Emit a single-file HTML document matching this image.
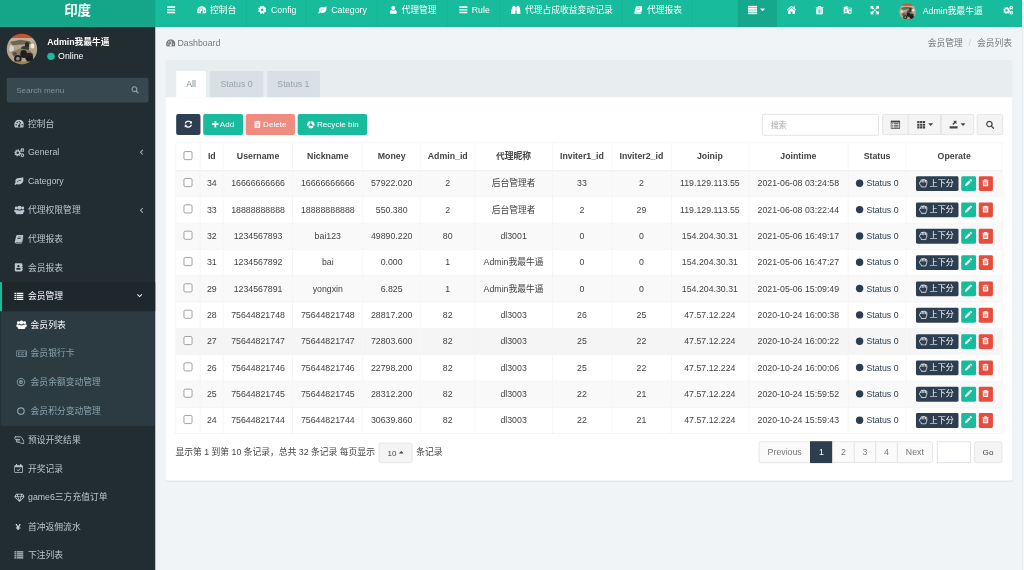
<!DOCTYPE html><html lang="zh"><head><meta charset="utf-8"><title>印度</title><style>
*{box-sizing:border-box}
html,body{margin:0;padding:0;width:1024px;height:570px;overflow:hidden;background:#f4f6f8}
#w{position:absolute;left:0;top:0;border-right:1px solid #e2e7eb;width:1515.3px;height:846px;transform:scale(.675);transform-origin:0 0;font:13px/1.42857 "Liberation Sans","Noto Sans CJK SC",sans-serif;color:#444;background:#f1f4f6;overflow:hidden}
svg.i{display:inline-block;vertical-align:middle;position:relative;top:-1px}
a{color:inherit;text-decoration:none}
ul{list-style:none;margin:0;padding:0}
/* header */
#hd{position:absolute;left:0;top:0;width:1515px;height:40px;background:#18bc9c;color:#fff}
#logo{position:absolute;left:0;top:0;width:230px;height:40px;background:#15a589;text-align:center;font-size:20px;font-weight:bold;line-height:30px}
#tog{position:absolute;left:230px;top:0;width:46.7px;height:40px;line-height:29px;padding-left:17px}
#nav{position:absolute;left:276.7px;top:0;height:40px;display:flex}
#nav li{height:40px;line-height:29px;text-align:center;border-right:1px solid rgba(0,0,0,.06);white-space:nowrap}
#nav li svg{margin-right:6.4px}
#nav li{padding-left:2.4px}
.hr{position:absolute;top:0;height:40px;line-height:29.5px;text-align:center}
#dd{left:1093.3px;width:57.8px;background:rgba(0,0,0,.1);padding-right:3px}
/* sidebar */
#sb{position:absolute;left:0;top:40px;width:230px;height:806px;background:#222d32;color:#b8c7ce}
#up{position:absolute;left:0;top:0;width:230px;height:65px}
#up .avs{position:absolute;left:10px;top:10px}
.avs{display:block}
#up .nm{position:absolute;left:70px;top:12px;color:#fff;font-weight:bold;font-size:13px;line-height:20px;white-space:nowrap}
#up .on{position:absolute;left:70px;top:36px;color:#fff;font-size:13px;line-height:16px;white-space:nowrap}
#up .on b{display:inline-block;width:11px;height:11px;border-radius:50%;background:#18bc9c;margin-right:5px;position:relative;top:.5px}
#sf{position:absolute;left:10px;top:75px;width:210px;height:36.5px;background:#374850;border-radius:3px;color:#85929a;line-height:38.5px;padding-left:14px;font-size:12px}
#sf svg{position:absolute;right:14px;top:12px;color:#9aa7ad}
#mn{position:absolute;left:0;top:122.8px;width:230px}
#mn li a{display:block;height:42.57px;line-height:42.57px;padding-left:17.5px;border-left:3px solid transparent;position:relative;white-space:nowrap}
#mn li a .ic{display:inline-block;width:21px;text-align:left}
#mn li a .r{position:absolute;right:18px;top:0}
#mn li.act>a{background:#1e282c;border-left-color:#18bc9c;color:#fff}
#mn ul{margin:0 1px;background:#2c3b41}
#mn ul li a{padding-left:20px;color:#8aa4af}
#mn ul li a .ic{width:21.3px}
#mn ul li.cur a{color:#fff}
/* content */
#bc1{position:absolute;left:246px;top:40px;height:48.5px;line-height:48.5px;color:#777;white-space:nowrap}
#bc1 svg{margin-right:3px}
#bc2{position:absolute;right:15px;top:40px;height:48.5px;line-height:48.5px;color:#777;white-space:nowrap}
#bc2 i{font-style:normal;color:#ccc;padding:0 8.7px}
#pn{position:absolute;left:245px;top:89px;width:1255px;height:622.7px;background:#fff;border-radius:3px;box-shadow:0 1px 1px rgba(0,0,0,.05)}
#ph{position:absolute;left:0;top:0;width:1255px;height:55px;background:#e8edf0;border-radius:3px 3px 0 0}
.tab{position:absolute;top:16px;height:39px;line-height:40px;text-align:center;border-radius:1px 1px 0 0;background:#d8e0e6;color:#95a5a6}
.tab.a{background:#fff;color:#7b8a8b}
.btn{position:absolute;border-radius:3px;text-align:center;white-space:nowrap;font-size:12px}
.tb{top:79.5px;height:31px;line-height:30px;color:#fff}
.tb svg{margin-right:3px;top:0}
.bd{background:#f4f4f4;border:1px solid #ddd;color:#444;line-height:28px}
#si{position:absolute;left:883.7px;top:79.6px;width:173px;height:32px;border:1px solid #d2d6de;border-radius:3px;background:#fff;color:#aaa;line-height:30px;padding-left:12px;font-size:12px}
table{position:absolute;left:15px;top:122px;width:1224.5px;border-collapse:collapse;table-layout:fixed;text-align:center}
th,td{border:1px solid #f1f1f1;padding:0;white-space:nowrap;overflow:hidden}
th{height:41px;font-weight:bold;border-bottom:2px solid #f1f1f1;color:#444}
td{height:39px;color:#444}
tr.o td{background:#f9f9f9}
tr.h td{background:#f5f5f5}
.cb{display:inline-block;width:13px;height:13px;border:1px solid #767676;border-radius:2.5px;background:#fff;vertical-align:middle;position:relative;top:-2px}
.st{color:#2c3e50}
.st b{display:inline-block;width:11px;height:11px;position:relative;top:1px;border-radius:50%;background:#2c3e50;margin-right:5px}
.ob{display:inline-block;height:22px;line-height:20px;border-radius:2.2px;color:#fff;font-size:12px;vertical-align:middle;text-align:center;margin:0 2.2px}
.ob svg{top:-1px}
.pg{position:absolute;top:564.5px;height:32.5px;line-height:30.5px;border:1px solid #ddd;background:#fafafa;color:#777;text-align:center;margin-left:-1px}
#pd{position:absolute;left:15px;top:564.5px;height:32.5px;line-height:32.5px;white-space:nowrap;color:#444}
</style></head><body><div id="w"><div id="hd"><div id="logo">印度</div><div id="tog"><svg class="i " viewBox="0 0 16 16" width="13.00" height="13.00" style="" fill="currentColor"><path d="M0.500 1.600h15v3h-15zM0.500 6.500h15v3h-15zM0.500 11.400h15v3h-15z"/></svg></div><ul id="nav"><li style="width:89.0px;padding-right:1.4px"><svg class="i " viewBox="0 1.700 16 13.200" width="13.87" height="11.44" style="margin-right:5px" fill="currentColor"><path fill-rule="evenodd" d="M8 2a8 8 0 0 1 8 8c0 1.600-.45 3-1.250 4.300-.1.200-.3.300-.5.300H1.750c-.2 0-.4-.1-.5-.3C.45 13 0 11.600 0 10a8 8 0 0 1 8-8zM3.300 9a1.150 1.150 0 1 0 0 2.300 1.150 1.150 0 0 0 0-2.300zm1.500-3.500a1.150 1.150 0 1 0 0 2.300 1.150 1.150 0 0 0 0-2.300zM8 4a1.150 1.150 0 1 0 0 2.300 1.150 1.150 0 0 0 0-2.300zm4.700 5a1.150 1.150 0 1 0 0 2.300 1.150 1.150 0 0 0 0-2.300zM10.700 6.200 9.100 10.300a1.900 1.900 0 1 1-1.200-.35l1.600-4.100z"/></svg>控制台</li><li style="width:88.5px"><svg class="i " viewBox="0 0 16 16" width="13.00" height="13.00" style="" fill="currentColor"><path fill-rule="evenodd" d="M15.49 9.80 L14.57 12.02 L12.88 11.66 L11.66 12.88 L12.02 14.57 L9.80 15.49 L8.86 14.04 L7.14 14.04 L6.20 15.49 L3.98 14.57 L4.34 12.88 L3.12 11.66 L1.43 12.02 L0.51 9.80 L1.96 8.86 L1.96 7.14 L0.51 6.20 L1.43 3.98 L3.12 4.34 L4.34 3.12 L3.98 1.43 L6.20 0.51 L7.14 1.96 L8.86 1.96 L9.80 0.51 L12.02 1.43 L11.66 3.12 L12.88 4.34 L14.57 3.98 L15.49 6.20 L14.04 7.14 L14.04 8.86Z M5.70 8.00 a2.30 2.30 0 1 0 4.60 0 a2.30 2.30 0 1 0 -4.60 0Z"/></svg>Config</li><li style="width:105.2px"><svg class="i " viewBox="0 0 16 16" width="13.00" height="13.00" style="" fill="currentColor"><path fill-rule="evenodd" d="M15.400 2c.4 1.100.6 2.400.6 3.700 0 5-3.700 8.200-8.200 8.200-1.300 0-2.500-.3-3.500-.8-.5.600-1.100 1.700-1.900 1.700C1.500 14.800.7 14 .7 13.200c0-.9 1-1.700 1.700-2.400C2.100 10.100 1.900 9.300 1.900 8.400c0-3.400 2.700-5.300 6.100-5.300 2.600 0 5.100-.1 7.400-1.100zM11.500 6.500C8.700 6.500 6.600 7.400 4.600 9.600c-.3.300.2.800.5.500C7.100 8.100 8.900 7.300 11.500 7.200c.5 0 .5-.7 0-.7z"/></svg>Category</li><li style="width:103.6px"><svg class="i " viewBox="0 0 14 16" width="11.38" height="13.00" style="" fill="currentColor"><path d="M7 1a3.600 3.600 0 1 1 0 7.200A3.600 3.600 0 0 1 7 1zM3.700 8.200c.9.800 2 1.300 3.300 1.300s2.400-.5 3.300-1.300c2.400.2 3.200 2.600 3.200 4.600 0 1.400-.9 2.200-2.200 2.200H2.700C1.400 15 .5 14.200.5 12.800c0-2 .8-4.400 3.200-4.600z"/></svg>代理管理</li><li style="width:77.9px"><svg class="i " viewBox="0 0 16 16" width="13.00" height="13.00" style="" fill="currentColor"><path d="M0.500 1.600h15v3h-15zM0.500 6.500h15v3h-15zM0.500 11.400h15v3h-15z"/></svg>Rule</li><li style="width:181.2px"><svg class="i " viewBox="0 0 17 15" width="14.73" height="13.00" style="" fill="currentColor"><path d="M3.200 .5h3.600v1.700h.7v11.600c0 .4-.3.700-.7.700H.700c-.4 0-.7-.3-.7-.7V11.500C0 8.500 2 5 2.600 2.200h.6zM10.200 .5h3.600v1.700h.6C15 5 17 8.500 17 11.500v2.300c0 .4-.3.700-.7.700h-6.100c-.4 0-.7-.3-.7-.7V2.200h.7zM7.900 2.800h1.200v6.400H7.900z"/></svg>代理占成收益变动记录</li><li style="width:104.1px"><svg class="i " viewBox="0 0 16 16" width="13.00" height="13.00" style="" fill="currentColor"><path fill-rule="evenodd" d="M5.200 1.500h9c.9 0 1.500.8 1.200 1.700l-2.600 8.600c-.3 1-.9 1.500-1.900 1.500H2.700c-.3 0-.4.300-.2.500.2.300.6.400 1 .400h8.100c.4 0 .700-.200.900-.600l2.700-8.500c.5.300.6 1 .4 1.600l-2.500 8c-.3.800-1 1.300-1.800 1.300H3.200c-1 0-2-.7-2.300-1.600-.2-.5-.1-.9 0-1.300L3.500 3c.3-.9.900-1.500 1.700-1.500zM6.300 4.300l-.3 1h5.800l.3-1zM5.600 6.600l-.3 1h5.800l.3-1z"/></svg>代理报表</li></ul><div class="hr" id="dd"><svg class="i " viewBox="0 0 16 16" width="14.00" height="14.00" style="" fill="currentColor"><path d="M0 .8h16v2.900H0zM0 4.600h16v2.900H0zM0 8.400h16v2.900H0zM0 12.200h16v2.900H0z"/></svg> <svg class="i " viewBox="0 0 8 16" width="7.50" height="15.00" style="" fill="currentColor"><path d="M0 6h8L4 10.300z"/></svg></div><div class="hr" style="left:1151.6px;width:42px"><svg class="i " viewBox="0 0 17 14" width="15.30" height="12.60" style="" fill="currentColor"><path d="M8.500 .6 16.300 7.100c.15.100.15.350 0 .5l-.6.700c-.1.150-.35.150-.5 0L8.500 2.700 1.800 8.300c-.15.150-.4.150-.5 0l-.6-.7c-.15-.15-.15-.4 0-.5zM8.500 4l5.600 4.700v4.600c0 .35-.3.700-.7.700H10.100V10H6.900v4H3.600c-.4 0-.7-.35-.7-.7V8.700zM12.200 1.400h2v3.500l-2-1.700z"/></svg></div><div class="hr" style="left:1193.4px;width:42px"><svg class="i " viewBox="0 0 14 16" width="12.25" height="14.00" style="" fill="currentColor"><path fill-rule="evenodd" d="M4.800 1h4.400l.9 1.600h3.200c.2 0 .3.100.3.300v.8c0 .2-.1.300-.3.300H.700c-.2 0-.3-.1-.3-.3v-.8c0-.2.100-.3.300-.3h3.200zM1.400 4.800h11.200v8.900c0 .9-.6 1.600-1.300 1.600H2.700c-.7 0-1.300-.7-1.300-1.600zM4 6.500v6.800h1.100V6.500zm2.450 0v6.800h1.100V6.500zm2.450 0v6.800H10V6.500z"/></svg></div><div class="hr" style="left:1234.7px;width:42px"><svg class="i " viewBox="0 0 15 16" width="13.12" height="14.00" style="" fill="currentColor"><path fill-rule="evenodd" d="M1 2.500 7.500 1v3h6.300c.4 0 .7.300.7.700v8.600c0 .4-.3.700-.7.700H8.200L7.500 12.500 1 14zM8.600 5l2 7.500 2.600 0V5zM2.800 5.800c.4 1.500 1.100 2.600 2.100 3.300-.7.500-1.400.8-2.200.9v.9c1.100-.1 2.100-.5 2.900-1.200.4.250.8.350 1.200.45v-.9c-.2-.05-.4-.1-.6-.2.600-.8.900-1.800.9-2.900h-.9c0 .9-.25 1.700-.7 2.400-.8-.5-1.400-1.400-1.800-2.700zM10.800 6.200l-.9 4h.8l.2-.9h1.300l.2.900h.8l-.9-4zm.7 1 .4 1.500h-.8z"/></svg></div><div class="hr" style="left:1275.3px;width:42px"><svg class="i " viewBox="0 0 16 16" width="14.00" height="14.00" style="" fill="currentColor"><path d="M.8 .8h5.700L4.700 2.600 7 4.900 4.900 7 2.600 4.700.8 6.500zM15.200 .8v5.700l-1.800-1.800L11.100 7 9 4.900l2.300-2.300L9.500 .8zM.8 15.200V9.500l1.800 1.800L4.900 9 7 11.100l-2.300 2.300 1.800 1.800zM15.200 15.200H9.500l1.800-1.800L9 11.100 11.100 9l2.300 2.300 1.800-1.800zM5.900 8 8 5.900 10.100 8 8 10.100z"/></svg></div><div class="hr" style="left:1332px;width:25px;top:5px;height:25px"><svg class="avs" width="25" height="25" viewBox="0 0 45 45"><defs><clipPath id="ca"><circle cx="22.5" cy="22.5" r="22.5"/></clipPath><filter id="fa" x="-10%" y="-10%" width="120%" height="120%"><feGaussianBlur stdDeviation="0.9"/></filter></defs><g clip-path="url(#ca)"><g filter="url(#fa)"><rect x="-3" y="-3" width="51" height="51" fill="#b3a48e"/><rect x="-3" y="-3" width="51" height="9.500" fill="#c2552b"/><rect x="-3" y="6.500" width="51" height="5" fill="#bfb29c"/><path d="M5 12 L20 9 L34 11 L36 15 L22 16 L8 17Z" fill="#6f6553"/><ellipse cx="30" cy="17" rx="3" ry="5" fill="#2b2a28"/><ellipse cx="38" cy="18" rx="3" ry="4" fill="#ece8e0"/><ellipse cx="27" cy="22" rx="6" ry="4" fill="#3a3732"/><ellipse cx="7" cy="22" rx="3.500" ry="5" fill="#d9d3c8"/><path d="M6 27 L20 22 L33 24 L40 30 L38 36 L24 33 L10 34Z" fill="#8b7d68"/><ellipse cx="25" cy="30" rx="5" ry="6" fill="#201e1c"/><ellipse cx="33" cy="34" rx="6" ry="6" fill="#262320"/><ellipse cx="12" cy="30" rx="3" ry="3" fill="#5d503c"/><circle cx="16.500" cy="37" r="5.500" fill="#1d1c1a"/><circle cx="16.500" cy="37" r="2.800" fill="#8d8980"/><circle cx="34" cy="38" r="5" fill="#1f1d1b"/><rect x="10" y="41" width="25" height="4" fill="#9a8253"/></g></g></svg></div><div class="hr" style="left:1367px;white-space:nowrap;line-height:31px">Admin我最牛逼</div><div class="hr" style="left:1485px;width:17px"><svg class="i " viewBox="0 0 18 16" width="15.75" height="14.00" style="" fill="currentColor"><path fill-rule="evenodd" d="M11.99 8.76 L11.62 10.60 L9.96 10.42 L9.27 11.45 L10.06 12.92 L8.49 13.96 L7.44 12.66 L6.23 12.89 L5.74 14.49 L3.90 14.12 L4.08 12.46 L3.05 11.77 L1.58 12.56 L0.54 10.99 L1.84 9.94 L1.61 8.73 L0.01 8.24 L0.38 6.40 L2.04 6.58 L2.73 5.55 L1.94 4.08 L3.51 3.04 L4.56 4.34 L5.77 4.11 L6.26 2.51 L8.10 2.88 L7.92 4.54 L8.95 5.23 L10.42 4.44 L11.46 6.01 L10.16 7.06 L10.39 8.27Z M3.90 8.50 a2.10 2.10 0 1 0 4.20 0 a2.10 2.10 0 1 0 -4.20 0Z M17.52 3.05 L17.52 4.55 L16.36 4.62 L15.89 5.43 L16.41 6.48 L15.11 7.22 L14.47 6.26 L13.53 6.26 L12.89 7.22 L11.59 6.48 L12.11 5.43 L11.64 4.62 L10.48 4.55 L10.48 3.05 L11.64 2.98 L12.11 2.17 L11.59 1.12 L12.89 0.38 L13.53 1.34 L14.47 1.34 L15.11 0.38 L16.41 1.12 L15.89 2.17 L16.36 2.98Z M12.90 3.80 a1.10 1.10 0 1 0 2.20 0 a1.10 1.10 0 1 0 -2.20 0Z M17.59 12.93 L17.14 14.36 L16.01 14.08 L15.33 14.72 L15.51 15.87 L14.05 16.20 L13.72 15.08 L12.83 14.81 L11.93 15.54 L10.91 14.44 L11.71 13.60 L11.50 12.69 L10.41 12.27 L10.86 10.84 L11.99 11.12 L12.67 10.48 L12.49 9.33 L13.95 9.00 L14.28 10.12 L15.17 10.39 L16.07 9.66 L17.09 10.76 L16.29 11.60 L16.50 12.51Z M12.90 12.60 a1.10 1.10 0 1 0 2.20 0 a1.10 1.10 0 1 0 -2.20 0Z"/></svg></div></div><div id="sb"><div id="up"><svg class="avs" width="45" height="45" viewBox="0 0 45 45"><defs><clipPath id="cb"><circle cx="22.5" cy="22.5" r="22.5"/></clipPath><filter id="fb" x="-10%" y="-10%" width="120%" height="120%"><feGaussianBlur stdDeviation="0.9"/></filter></defs><g clip-path="url(#cb)"><g filter="url(#fb)"><rect x="-3" y="-3" width="51" height="51" fill="#b3a48e"/><rect x="-3" y="-3" width="51" height="9.500" fill="#c2552b"/><rect x="-3" y="6.500" width="51" height="5" fill="#bfb29c"/><path d="M5 12 L20 9 L34 11 L36 15 L22 16 L8 17Z" fill="#6f6553"/><ellipse cx="30" cy="17" rx="3" ry="5" fill="#2b2a28"/><ellipse cx="38" cy="18" rx="3" ry="4" fill="#ece8e0"/><ellipse cx="27" cy="22" rx="6" ry="4" fill="#3a3732"/><ellipse cx="7" cy="22" rx="3.500" ry="5" fill="#d9d3c8"/><path d="M6 27 L20 22 L33 24 L40 30 L38 36 L24 33 L10 34Z" fill="#8b7d68"/><ellipse cx="25" cy="30" rx="5" ry="6" fill="#201e1c"/><ellipse cx="33" cy="34" rx="6" ry="6" fill="#262320"/><ellipse cx="12" cy="30" rx="3" ry="3" fill="#5d503c"/><circle cx="16.500" cy="37" r="5.500" fill="#1d1c1a"/><circle cx="16.500" cy="37" r="2.800" fill="#8d8980"/><circle cx="34" cy="38" r="5" fill="#1f1d1b"/><rect x="10" y="41" width="25" height="4" fill="#9a8253"/></g></g></svg><div class="nm">Admin我最牛逼</div><div class="on"><b></b>Online</div></div><div id="sf">Search menu<svg class="i " viewBox="0 0 16 16" width="12.00" height="12.00" style="" fill="currentColor"><path fill-rule="evenodd" d="M6.800 1a5.800 5.800 0 0 1 4.800 9.100l3.300 3.300c.5.500.5 1.200 0 1.700s-1.200.5-1.700 0l-3.300-3.300A5.800 5.800 0 1 1 6.800 1zm0 2.100a3.700 3.700 0 1 0 0 7.400 3.700 3.700 0 0 0 0-7.400z"/></svg></div><ul id="mn"><li class=""><a><span class="ic"><svg class="i " viewBox="0 1.700 16 13.200" width="14.93" height="12.32" style="" fill="currentColor"><path fill-rule="evenodd" d="M8 2a8 8 0 0 1 8 8c0 1.600-.45 3-1.250 4.300-.1.200-.3.300-.5.300H1.750c-.2 0-.4-.1-.5-.3C.45 13 0 11.600 0 10a8 8 0 0 1 8-8zM3.300 9a1.150 1.150 0 1 0 0 2.300 1.150 1.150 0 0 0 0-2.300zm1.500-3.500a1.150 1.150 0 1 0 0 2.300 1.150 1.150 0 0 0 0-2.300zM8 4a1.150 1.150 0 1 0 0 2.300 1.150 1.150 0 0 0 0-2.300zm4.700 5a1.150 1.150 0 1 0 0 2.300 1.150 1.150 0 0 0 0-2.300zM10.700 6.200 9.100 10.300a1.900 1.900 0 1 1-1.200-.35l1.600-4.100z"/></svg></span>控制台</a></li><li class=""><a><span class="ic"><svg class="i " viewBox="0 0 18 16" width="15.75" height="14.00" style="" fill="currentColor"><path fill-rule="evenodd" d="M11.99 8.76 L11.62 10.60 L9.96 10.42 L9.27 11.45 L10.06 12.92 L8.49 13.96 L7.44 12.66 L6.23 12.89 L5.74 14.49 L3.90 14.12 L4.08 12.46 L3.05 11.77 L1.58 12.56 L0.54 10.99 L1.84 9.94 L1.61 8.73 L0.01 8.24 L0.38 6.40 L2.04 6.58 L2.73 5.55 L1.94 4.08 L3.51 3.04 L4.56 4.34 L5.77 4.11 L6.26 2.51 L8.10 2.88 L7.92 4.54 L8.95 5.23 L10.42 4.44 L11.46 6.01 L10.16 7.06 L10.39 8.27Z M3.90 8.50 a2.10 2.10 0 1 0 4.20 0 a2.10 2.10 0 1 0 -4.20 0Z M17.52 3.05 L17.52 4.55 L16.36 4.62 L15.89 5.43 L16.41 6.48 L15.11 7.22 L14.47 6.26 L13.53 6.26 L12.89 7.22 L11.59 6.48 L12.11 5.43 L11.64 4.62 L10.48 4.55 L10.48 3.05 L11.64 2.98 L12.11 2.17 L11.59 1.12 L12.89 0.38 L13.53 1.34 L14.47 1.34 L15.11 0.38 L16.41 1.12 L15.89 2.17 L16.36 2.98Z M12.90 3.80 a1.10 1.10 0 1 0 2.20 0 a1.10 1.10 0 1 0 -2.20 0Z M17.59 12.93 L17.14 14.36 L16.01 14.08 L15.33 14.72 L15.51 15.87 L14.05 16.20 L13.72 15.08 L12.83 14.81 L11.93 15.54 L10.91 14.44 L11.71 13.60 L11.50 12.69 L10.41 12.27 L10.86 10.84 L11.99 11.12 L12.67 10.48 L12.49 9.33 L13.95 9.00 L14.28 10.12 L15.17 10.39 L16.07 9.66 L17.09 10.76 L16.29 11.60 L16.50 12.51Z M12.90 12.60 a1.10 1.10 0 1 0 2.20 0 a1.10 1.10 0 1 0 -2.20 0Z"/></svg></span>General<span class="r"><svg class="i " viewBox="0 0 8 16" width="6.50" height="13.00" style="" fill="currentColor"><path d="M6.300 3.200 7.400 4.300 3.700 8l3.700 3.700-1.100 1.100L1.500 8z"/></svg></span></a></li><li class=""><a><span class="ic"><svg class="i " viewBox="0 0 16 16" width="14.00" height="14.00" style="" fill="currentColor"><path fill-rule="evenodd" d="M15.400 2c.4 1.100.6 2.400.6 3.700 0 5-3.700 8.200-8.200 8.200-1.300 0-2.500-.3-3.500-.8-.5.600-1.100 1.700-1.900 1.700C1.500 14.800.7 14 .7 13.200c0-.9 1-1.700 1.700-2.400C2.100 10.100 1.900 9.300 1.900 8.400c0-3.400 2.700-5.300 6.100-5.300 2.600 0 5.100-.1 7.400-1.100zM11.500 6.500C8.700 6.500 6.600 7.400 4.600 9.600c-.3.300.2.800.5.500C7.100 8.100 8.900 7.300 11.500 7.200c.5 0 .5-.7 0-.7z"/></svg></span>Category</a></li><li class=""><a><span class="ic"><svg class="i " viewBox="0 0 18 16" width="15.75" height="14.00" style="" fill="currentColor"><path d="M9 .8a3.500 3.500 0 1 1 0 7 3.500 3.500 0 0 1 0-7zM3.500 2.200a2.400 2.400 0 1 1 0 4.800 2.400 2.400 0 0 1 0-4.800zM14.500 2.200a2.400 2.400 0 1 1 0 4.800 2.400 2.400 0 0 1 0-4.800zM5.500 8c1 .8 2.200 1.200 3.500 1.200s2.500-.4 3.500-1.200c2.300.2 3.100 2.700 3.100 4.700 0 1.500-.9 2.500-2.100 2.500h-9c-1.200 0-2.100-1-2.100-2.500 0-2 .8-4.500 3.100-4.700zM1.800 7.300c.5.400 1.100.600 1.700.600.5 0 1-.15 1.400-.4-.8.500-1.400 1.100-1.800 1.900-.4.800-.6 1.600-.7 2.600H1.600C.6 12 0 11.400 0 10.300c0-1.500.5-2.900 1.800-3zM16.200 7.300c1.300.100 1.800 1.500 1.800 3 0 1.100-.6 1.700-1.600 1.700h-.8c-.1-1-.3-1.800-.7-2.600-.4-.8-1-1.400-1.800-1.900.4.250.9.400 1.400.400.6 0 1.200-.2 1.700-.6z"/></svg></span>代理权限管理<span class="r"><svg class="i " viewBox="0 0 8 16" width="6.50" height="13.00" style="" fill="currentColor"><path d="M6.300 3.200 7.400 4.300 3.700 8l3.700 3.700-1.100 1.100L1.500 8z"/></svg></span></a></li><li class=""><a><span class="ic"><svg class="i " viewBox="0 0 16 16" width="14.00" height="14.00" style="" fill="currentColor"><path fill-rule="evenodd" d="M5.200 1.500h9c.9 0 1.500.8 1.200 1.700l-2.600 8.600c-.3 1-.9 1.500-1.900 1.500H2.700c-.3 0-.4.300-.2.500.2.300.6.400 1 .400h8.100c.4 0 .700-.200.900-.600l2.700-8.500c.5.300.6 1 .4 1.600l-2.500 8c-.3.800-1 1.300-1.800 1.300H3.200c-1 0-2-.7-2.300-1.600-.2-.5-.1-.9 0-1.300L3.500 3c.3-.9.900-1.500 1.700-1.500zM6.300 4.300l-.3 1h5.800l.3-1zM5.600 6.600l-.3 1h5.800l.3-1z"/></svg></span>代理报表</a></li><li class=""><a><span class="ic"><svg class="i " viewBox="0 0 15 16" width="13.12" height="14.00" style="" fill="currentColor"><path fill-rule="evenodd" d="M2.500 1h9.500c.8 0 1.500.7 1.500 1.500v11c0 .8-.7 1.500-1.500 1.500H2.500C1.700 15 1 14.300 1 13.500v-11C1 1.700 1.700 1 2.500 1zM7.200 4a2 2 0 1 0 0 4 2 2 0 0 0 0-4zM5.300 8.600c-1.300.2-1.800 1.300-1.800 2.300 0 .7.500 1.100 1.200 1.100h5c.7 0 1.200-.4 1.200-1.100 0-1-.5-2.100-1.800-2.300-.5.400-1.200.7-1.900.7s-1.400-.3-1.900-.7zM14 3.500h.7c.2 0 .3.100.3.300v1.900c0 .2-.1.300-.3.300H14zM14 7h.7c.2 0 .3.100.3.300v1.900c0 .2-.1.300-.3.300H14zM14 10.500h.7c.2 0 .3.100.3.300v1.900c0 .2-.1.300-.3.300H14z"/></svg></span>会员报表</a></li><li class="act"><a><span class="ic"><svg class="i " viewBox="0 0 16 16" width="14.00" height="14.00" style="" fill="currentColor"><path d="M.3 2h2.900v2.200H.3zM4.200 2h11.500v2.200H4.200zM.3 5.300h2.900v2.200H.3zM4.200 5.300h11.500v2.200H4.200zM.3 8.600h2.900v2.200H.3zM4.200 8.600h11.500v2.200H4.200zM.3 11.900h2.900v2.200H.3zM4.200 11.900h11.500v2.200H4.200z"/></svg></span>会员管理<span class="r"><svg class="i " viewBox="0 0 12 16" width="9.75" height="13.00" style="" fill="currentColor"><path d="M1.300 5.600 2.400 4.500 6 8.100l3.600-3.600 1.100 1.100L6 10.300z"/></svg></span></a></li><li><ul><li class="cur"><a><span class="ic"><svg class="i " viewBox="0 0 18 16" width="15.75" height="14.00" style="" fill="currentColor"><path d="M9 .8a3.500 3.500 0 1 1 0 7 3.500 3.500 0 0 1 0-7zM3.500 2.200a2.400 2.400 0 1 1 0 4.800 2.400 2.400 0 0 1 0-4.800zM14.500 2.200a2.400 2.400 0 1 1 0 4.800 2.400 2.400 0 0 1 0-4.800zM5.500 8c1 .8 2.200 1.200 3.500 1.200s2.500-.4 3.500-1.200c2.300.2 3.100 2.700 3.100 4.700 0 1.500-.9 2.500-2.100 2.500h-9c-1.200 0-2.100-1-2.100-2.500 0-2 .8-4.500 3.100-4.700zM1.800 7.300c.5.400 1.100.600 1.700.600.5 0 1-.15 1.400-.4-.8.500-1.400 1.100-1.800 1.900-.4.800-.6 1.600-.7 2.600H1.600C.6 12 0 11.400 0 10.300c0-1.500.5-2.900 1.800-3zM16.200 7.300c1.300.100 1.800 1.500 1.800 3 0 1.100-.6 1.700-1.600 1.700h-.8c-.1-1-.3-1.800-.7-2.600-.4-.8-1-1.400-1.800-1.900.4.250.9.400 1.400.400.6 0 1.200-.2 1.700-.6z"/></svg></span>会员列表</a></li><li class=""><a><span class="ic"><svg class="i " viewBox="0 0 18 16" width="15.75" height="14.00" style="" fill="currentColor"><path fill-rule="evenodd" d="M1.500 2.500h15c.8 0 1.500.7 1.500 1.500v8c0 .8-.7 1.500-1.500 1.500h-15C.7 13.500 0 12.800 0 12V4c0-.8.700-1.500 1.500-1.500zM1.300 3.800v8.400h15.400V3.800zM3 5.500h4.500v1H4.200v3h3.300v1H3zM9 5.500h4.500v1h-3.300v3h3.300v1H9zM15 5.500h1v5h-1z"/></svg></span>会员银行卡</a></li><li class=""><a><span class="ic"><svg class="i " viewBox="0 0 16 16" width="14.00" height="14.00" style="" fill="currentColor"><path fill-rule="evenodd" d="M8 1a7 7 0 1 1 0 14A7 7 0 0 1 8 1zm0 1.500a5.500 5.500 0 1 0 0 11 5.500 5.500 0 0 0 0-11zM8 4.600a3.400 3.400 0 1 1 0 6.800 3.400 3.400 0 0 1 0-6.800zM5.700 7.400v1.200h4.600V7.400zM0 7.400h2v1.200H0zM14 7.400h2v1.200h-2z"/></svg></span>会员余额变动管理</a></li><li class=""><a><span class="ic"><svg class="i " viewBox="0 0 16 16" width="14.00" height="14.00" style="" fill="currentColor"><path fill-rule="evenodd" d="M8 1.500a6.500 6.500 0 1 1 0 13 6.500 6.500 0 0 1 0-13zm0 2a4.500 4.500 0 1 0 0 9 4.500 4.500 0 0 0 0-9z"/></svg></span>会员积分变动管理</a></li></ul></li><li class=""><a><span class="ic"><svg class="i " viewBox="0 0 18 14" width="15.48" height="12.04" style="" fill="currentColor"><path fill="none" stroke="currentColor" stroke-width="1.500" stroke-linejoin="round" stroke-linecap="round" d="M2.200 1.300H10.500C12.300 1.300 13.200 2.600 14.200 4.500L16.800 9.200V12.600H12.300C10.800 12.600 10.200 11.200 8.800 10.700H5C3.400 10.700 3.400 8.600 5 8.400C3.300 8.200 3.300 6 5 5.800H2.200C.4 5.800.4 1.300 2.200 1.300ZM5 5.800H9.500M5 8.400H8.800"/></svg></span>预设开奖结果</a></li><li class=""><a><span class="ic"><svg class="i " viewBox="0 0 15 16" width="13.12" height="14.00" style="" fill="currentColor"><path fill-rule="evenodd" d="M3.500.5h1c.3 0 .5.200.5.500v1.500h5V1c0-.3.200-.5.500-.5h1c.3 0 .5.200.5.500v1.500h1.500c.8 0 1.500.7 1.500 1.500v10c0 .8-.7 1.500-1.500 1.500h-12C.7 15.500 0 14.800 0 14V4c0-.8.700-1.500 1.500-1.500H3V1c0-.3.200-.5.500-.5zM1.400 6v8h12.200V6zM10.300 7.500l.9.900-4.500 4.500-2.600-2.600.9-.9 1.700 1.700z"/></svg></span>开奖记录</a></li><li class=""><a><span class="ic"><svg class="i " viewBox="0 0 18 16" width="15.75" height="14.00" style="" fill="currentColor"><path fill-rule="evenodd" d="M4 1.500h10c.2 0 .4.100.5.300l3.300 4.400c.2.300.2.600 0 .9l-8.300 8.200c-.3.300-.7.300-1 0L.2 7.100c-.2-.3-.2-.6 0-.9L3.500 1.800c.1-.2.300-.3.500-.3zM4.600 3 2.500 5.800h3zM7 3 6.200 5.800h5.600L11 3zM13.400 3l-.9 2.800h3zM2.300 7.200 7.700 12.700 5.700 7.200zM7.200 7.200 9 12.600l1.800-5.400zM12.300 7.200l-2 5.500 5.400-5.500z"/></svg></span>game6三方充值订单</a></li><li class=""><a><span class="ic"><span style="font-weight:bold;padding-left:2.5px;font-size:14px;color:#d5dfe3">¥</span></span>首冲返佣流水</a></li><li class=""><a><span class="ic"><svg class="i " viewBox="0 0 16 16" width="14.00" height="14.00" style="" fill="currentColor"><path d="M.3 2h2.900v2.200H.3zM4.200 2h11.500v2.200H4.200zM.3 5.300h2.900v2.200H.3zM4.200 5.300h11.500v2.200H4.200zM.3 8.600h2.900v2.200H.3zM4.200 8.600h11.500v2.200H4.200zM.3 11.900h2.900v2.200H.3zM4.200 11.900h11.500v2.200H4.200z"/></svg></span>下注列表</a></li></ul></div><div id="bc1"><svg class="i " viewBox="0 1.700 16 13.200" width="13.87" height="11.44" style="" fill="currentColor"><path fill-rule="evenodd" d="M8 2a8 8 0 0 1 8 8c0 1.600-.45 3-1.250 4.300-.1.200-.3.300-.5.300H1.750c-.2 0-.4-.1-.5-.3C.45 13 0 11.600 0 10a8 8 0 0 1 8-8zM3.300 9a1.150 1.150 0 1 0 0 2.300 1.150 1.150 0 0 0 0-2.300zm1.500-3.500a1.150 1.150 0 1 0 0 2.300 1.150 1.150 0 0 0 0-2.300zM8 4a1.150 1.150 0 1 0 0 2.300 1.150 1.150 0 0 0 0-2.300zm4.700 5a1.150 1.150 0 1 0 0 2.300 1.150 1.150 0 0 0 0-2.300zM10.700 6.200 9.100 10.300a1.900 1.900 0 1 1-1.200-.35l1.600-4.100z"/></svg>Dashboard</div><div id="bc2">会员管理<i>/</i>会员列表</div><div id="pn"><div id="ph"><div class="tab a" style="left:16.0px;width:44.2px">All</div><div class="tab " style="left:66.2px;width:78.5px">Status 0</div><div class="tab " style="left:150.6px;width:78.2px">Status 1</div></div><div class="btn tb" style="left:15.7px;width:36.0px;background:#2c3e50"><svg class="i " viewBox="0 0 16 16" width="12.00" height="12.00" style="margin:0" fill="currentColor"><path d="M15.300 1.500v5.200h-5.200l1.900-1.900C11 3.900 9.600 3.300 8 3.300c-2.200 0-4 1.400-4.600 3.400H.8C1.500 3.200 4.500.8 8 .8c2.200 0 4.200.9 5.700 2.300zM.7 14.500V9.300h5.200L4 11.200c1 .9 2.400 1.500 4 1.500 2.200 0 4-1.400 4.600-3.400h2.600c-.7 3.500-3.700 5.900-7.200 5.900-2.200 0-4.200-.9-5.700-2.300z"/></svg></div><div class="btn tb" style="left:55.7px;width:58.9px;background:#18bc9c"><svg class="i " viewBox="0 0 16 16" width="12.00" height="12.00" style="margin-right:.5px" fill="currentColor"><path d="M6.200 1.500h3.600v4.700h4.700v3.600H9.800v4.700H6.200V9.800H1.500V6.200h4.700z"/></svg>Add</div><div class="btn tb" style="left:119.1px;width:72.6px;background:#ef8b80"><svg class="i " viewBox="0 0 14 16" width="10.50" height="12.00" style="" fill="currentColor"><path fill-rule="evenodd" d="M4.800 1h4.400l.9 1.600h3.200c.2 0 .3.100.3.300v.8c0 .2-.1.300-.3.300H.700c-.2 0-.3-.1-.3-.3v-.8c0-.2.100-.3.300-.3h3.200zM1.400 4.800h11.200v8.900c0 .9-.6 1.600-1.300 1.600H2.700c-.7 0-1.300-.7-1.300-1.600zM4 6.500v6.800h1.100V6.500zm2.450 0v6.800h1.100V6.500zm2.450 0v6.800H10V6.500z"/></svg>Delete</div><div class="btn tb" style="left:196.1px;width:103.0px;background:#18bc9c"><svg class="i " viewBox="0 0 16 16" width="13.00" height="13.00" style="" fill="currentColor"><path fill="none" stroke="currentColor" stroke-width="4.200" d="M8.82 3.57A4.70 4.70 0 0 1 12.42 9.81M11.60 11.22A4.70 4.70 0 0 1 4.40 11.22M3.58 9.81A4.70 4.70 0 0 1 7.18 3.57"/></svg>Recycle bin</div><div id="si">搜索</div><div class="btn tb bd" style="left:1062.4px;width:38.8px;border-radius:3px 0 0 3px"><svg class="i " viewBox="0 0.800 16 14.400" width="15.00" height="13.50" style="margin:0" fill="currentColor"><path fill-rule="evenodd" d="M1.500 1.500h13c.6 0 1 .4 1 1v11c0 .6-.4 1-1 1h-13c-.6 0-1-.4-1-1v-11c0-.6.400-1 1-1zM1.800 4.500v8.700h12.400V4.500zM3 5.800h1.800v1.500H3zm3 0h7v1.500H6zM3 8.300h1.800v1.500H3zm3 0h7v1.500H6zM3 10.800h1.800v1.500H3zm3 0h7v1.500H6z"/></svg></div><div class="btn tb bd" style="left:1100.2px;width:49.3px;border-radius:0"><svg class="i " viewBox="0 0 16 16" width="13.50" height="13.50" style="margin:0" fill="currentColor"><path d="M1 1.500h4v3.600H1zM6 1.500h4v3.600H6zM11 1.500h4v3.600h-4zM1 6.200h4v3.600H1zM6 6.200h4v3.600H6zM11 6.200h4v3.600h-4zM1 10.900h4v3.600H1zM6 10.900h4v3.600H6zM11 10.900h4v3.600h-4z"/></svg> <svg class="i " viewBox="0 0 8 16" width="7.50" height="15.00" style="margin:0" fill="currentColor"><path d="M0 6h8L4 10.300z"/></svg></div><div class="btn tb bd" style="left:1148.5px;width:49.4px;border-radius:0 3px 3px 0"><svg class="i " viewBox="0 0 16 16" width="13.50" height="13.50" style="margin:0" fill="currentColor"><path d="M13 1v6l-2-2-3.500 3.500L5.700 6.700 9.200 3.200 7 1zM1 10.500h14v4H1z"/></svg> <svg class="i " viewBox="0 0 8 16" width="7.50" height="15.00" style="margin:0" fill="currentColor"><path d="M0 6h8L4 10.300z"/></svg></div><div class="btn tb bd" style="left:1201.5px;width:39.7px;border-radius:3px"><svg class="i " viewBox="0 0 16 16" width="13.50" height="13.50" style="margin:0" fill="currentColor"><path fill-rule="evenodd" d="M6.800 1a5.800 5.800 0 0 1 4.800 9.100l3.300 3.300c.5.500.5 1.200 0 1.700s-1.200.5-1.700 0l-3.300-3.300A5.800 5.800 0 1 1 6.800 1zm0 2.100a3.700 3.700 0 1 0 0 7.400 3.700 3.700 0 0 0 0-7.400z"/></svg></div><table><colgroup><col style="width:36.3px"><col style="width:34.0px"><col style="width:103.0px"><col style="width:103.7px"><col style="width:85.5px"><col style="width:80.7px"><col style="width:114.4px"><col style="width:88.1px"><col style="width:88.1px"><col style="width:114.8px"><col style="width:147.4px"><col style="width:85.9px"><col style="width:142.6px"></colgroup><thead><tr><th><span class="cb"></span></th><th>Id</th><th>Username</th><th>Nickname</th><th>Money</th><th>Admin_id</th><th>代理昵称</th><th>Inviter1_id</th><th>Inviter2_id</th><th>Joinip</th><th>Jointime</th><th>Status</th><th>Operate</th></tr></thead><tbody><tr class="o"><td><span class="cb"></span></td><td>34</td><td>16666666666</td><td>16666666666</td><td>57922.020</td><td>2</td><td>后台管理者</td><td>33</td><td>2</td><td>119.129.113.55</td><td>2021-06-08 03:24:58</td><td class="st"><b></b>Status 0</td><td><span class="ob" style="width:63px;background:#2c3e50;padding-right:2px"><svg class="i " viewBox="0 0 16 16" width="13.50" height="13.50" style="" fill="currentColor"><path fill="none" stroke="currentColor" stroke-width="1.400" stroke-linejoin="round" stroke-linecap="round" d="M4.800 14.800C4.800 13 2.600 11.800 1.700 10.200C.9 8.800 1.200 7 2.600 6.700C3.100 6.600 3.600 6.800 3.800 7.200V4.200C3.800 2.700 5.900 2.300 6.300 3.700C6.500 1.700 8.900 1.500 9.200 3.400C9.600 1.900 11.700 2.200 11.800 3.900C12.300 2.900 14.300 3.200 14.300 5V9.300C14.300 11.200 12.600 12.400 12.600 14.800ZM6.300 3.700V6.800M9.100 3.400V6.800M11.800 3.900V6.800"/></svg><span style="margin-left:2.3px">上下分</span></span><span class="ob" style="width:22px;background:#18bc9c"><svg class="i " viewBox="0 0 16 16" width="11.50" height="11.50" style="" fill="currentColor"><path d="M11.800 1c.5-.5 1.200-.5 1.700 0L15 2.500c.5.500.5 1.200 0 1.700l-1.500 1.500-3.200-3.200zM9.500 3.300l3.200 3.200-8 8L.9 15.400c-.2.100-.4-.1-.3-.3L1.500 11.300z"/></svg></span><span class="ob" style="width:21px;background:#e74c3c;margin-left:1.3px"><svg class="i " viewBox="0 0 14 16" width="10.06" height="11.50" style="" fill="currentColor"><path fill-rule="evenodd" d="M4.800 1h4.400l.9 1.600h3.200c.2 0 .3.100.3.300v.8c0 .2-.1.300-.3.300H.700c-.2 0-.3-.1-.3-.3v-.8c0-.2.100-.3.300-.3h3.200zM1.400 4.800h11.200v8.900c0 .9-.6 1.600-1.300 1.600H2.700c-.7 0-1.300-.7-1.300-1.600zM4 6.500v6.800h1.100V6.500zm2.450 0v6.800h1.100V6.500zm2.450 0v6.800H10V6.500z"/></svg></span></td></tr><tr class=""><td><span class="cb"></span></td><td>33</td><td>18888888888</td><td>18888888888</td><td>550.380</td><td>2</td><td>后台管理者</td><td>2</td><td>29</td><td>119.129.113.55</td><td>2021-06-08 03:22:44</td><td class="st"><b></b>Status 0</td><td><span class="ob" style="width:63px;background:#2c3e50;padding-right:2px"><svg class="i " viewBox="0 0 16 16" width="13.50" height="13.50" style="" fill="currentColor"><path fill="none" stroke="currentColor" stroke-width="1.400" stroke-linejoin="round" stroke-linecap="round" d="M4.800 14.800C4.800 13 2.600 11.800 1.700 10.200C.9 8.800 1.200 7 2.600 6.700C3.100 6.600 3.600 6.800 3.800 7.200V4.200C3.800 2.700 5.900 2.300 6.300 3.700C6.500 1.700 8.900 1.500 9.200 3.400C9.600 1.900 11.700 2.200 11.800 3.900C12.300 2.900 14.300 3.200 14.300 5V9.300C14.300 11.200 12.600 12.400 12.600 14.800ZM6.300 3.700V6.800M9.100 3.400V6.800M11.800 3.900V6.800"/></svg><span style="margin-left:2.3px">上下分</span></span><span class="ob" style="width:22px;background:#18bc9c"><svg class="i " viewBox="0 0 16 16" width="11.50" height="11.50" style="" fill="currentColor"><path d="M11.800 1c.5-.5 1.200-.5 1.700 0L15 2.500c.5.500.5 1.200 0 1.700l-1.500 1.500-3.200-3.200zM9.500 3.300l3.200 3.200-8 8L.9 15.400c-.2.100-.4-.1-.3-.3L1.500 11.300z"/></svg></span><span class="ob" style="width:21px;background:#e74c3c;margin-left:1.3px"><svg class="i " viewBox="0 0 14 16" width="10.06" height="11.50" style="" fill="currentColor"><path fill-rule="evenodd" d="M4.800 1h4.400l.9 1.600h3.200c.2 0 .3.100.3.300v.8c0 .2-.1.300-.3.300H.700c-.2 0-.3-.1-.3-.3v-.8c0-.2.100-.3.300-.3h3.200zM1.400 4.800h11.200v8.900c0 .9-.6 1.600-1.300 1.600H2.700c-.7 0-1.300-.7-1.300-1.600zM4 6.500v6.800h1.100V6.500zm2.450 0v6.800h1.100V6.500zm2.450 0v6.800H10V6.500z"/></svg></span></td></tr><tr class="o"><td><span class="cb"></span></td><td>32</td><td>1234567893</td><td>bai123</td><td>49890.220</td><td>80</td><td>dl3001</td><td>0</td><td>0</td><td>154.204.30.31</td><td>2021-05-06 16:49:17</td><td class="st"><b></b>Status 0</td><td><span class="ob" style="width:63px;background:#2c3e50;padding-right:2px"><svg class="i " viewBox="0 0 16 16" width="13.50" height="13.50" style="" fill="currentColor"><path fill="none" stroke="currentColor" stroke-width="1.400" stroke-linejoin="round" stroke-linecap="round" d="M4.800 14.800C4.800 13 2.600 11.800 1.700 10.200C.9 8.800 1.200 7 2.600 6.700C3.100 6.600 3.600 6.800 3.800 7.200V4.200C3.800 2.700 5.900 2.300 6.300 3.700C6.500 1.700 8.900 1.500 9.200 3.400C9.600 1.900 11.700 2.200 11.800 3.900C12.300 2.900 14.300 3.200 14.300 5V9.300C14.300 11.200 12.600 12.400 12.600 14.800ZM6.300 3.700V6.800M9.100 3.400V6.800M11.800 3.900V6.800"/></svg><span style="margin-left:2.3px">上下分</span></span><span class="ob" style="width:22px;background:#18bc9c"><svg class="i " viewBox="0 0 16 16" width="11.50" height="11.50" style="" fill="currentColor"><path d="M11.800 1c.5-.5 1.200-.5 1.700 0L15 2.500c.5.500.5 1.200 0 1.700l-1.500 1.500-3.200-3.200zM9.500 3.300l3.200 3.200-8 8L.9 15.400c-.2.100-.4-.1-.3-.3L1.500 11.300z"/></svg></span><span class="ob" style="width:21px;background:#e74c3c;margin-left:1.3px"><svg class="i " viewBox="0 0 14 16" width="10.06" height="11.50" style="" fill="currentColor"><path fill-rule="evenodd" d="M4.800 1h4.400l.9 1.600h3.200c.2 0 .3.100.3.300v.8c0 .2-.1.300-.3.300H.700c-.2 0-.3-.1-.3-.3v-.8c0-.2.100-.3.300-.3h3.200zM1.400 4.800h11.200v8.900c0 .9-.6 1.600-1.300 1.600H2.700c-.7 0-1.300-.7-1.300-1.600zM4 6.500v6.800h1.100V6.500zm2.450 0v6.800h1.100V6.500zm2.450 0v6.800H10V6.500z"/></svg></span></td></tr><tr class=""><td><span class="cb"></span></td><td>31</td><td>1234567892</td><td>bai</td><td>0.000</td><td>1</td><td>Admin我最牛逼</td><td>0</td><td>0</td><td>154.204.30.31</td><td>2021-05-06 16:47:27</td><td class="st"><b></b>Status 0</td><td><span class="ob" style="width:63px;background:#2c3e50;padding-right:2px"><svg class="i " viewBox="0 0 16 16" width="13.50" height="13.50" style="" fill="currentColor"><path fill="none" stroke="currentColor" stroke-width="1.400" stroke-linejoin="round" stroke-linecap="round" d="M4.800 14.800C4.800 13 2.600 11.800 1.700 10.200C.9 8.800 1.200 7 2.600 6.700C3.100 6.600 3.600 6.800 3.800 7.200V4.200C3.800 2.700 5.900 2.300 6.300 3.700C6.500 1.700 8.900 1.500 9.200 3.400C9.600 1.900 11.700 2.200 11.800 3.900C12.300 2.900 14.300 3.200 14.300 5V9.300C14.300 11.200 12.600 12.400 12.600 14.800ZM6.300 3.700V6.800M9.100 3.400V6.800M11.800 3.900V6.800"/></svg><span style="margin-left:2.3px">上下分</span></span><span class="ob" style="width:22px;background:#18bc9c"><svg class="i " viewBox="0 0 16 16" width="11.50" height="11.50" style="" fill="currentColor"><path d="M11.800 1c.5-.5 1.200-.5 1.700 0L15 2.500c.5.500.5 1.200 0 1.700l-1.500 1.500-3.200-3.200zM9.500 3.300l3.200 3.200-8 8L.9 15.400c-.2.100-.4-.1-.3-.3L1.500 11.300z"/></svg></span><span class="ob" style="width:21px;background:#e74c3c;margin-left:1.3px"><svg class="i " viewBox="0 0 14 16" width="10.06" height="11.50" style="" fill="currentColor"><path fill-rule="evenodd" d="M4.800 1h4.400l.9 1.600h3.200c.2 0 .3.100.3.300v.8c0 .2-.1.300-.3.300H.700c-.2 0-.3-.1-.3-.3v-.8c0-.2.100-.3.300-.3h3.200zM1.400 4.800h11.200v8.900c0 .9-.6 1.600-1.300 1.600H2.700c-.7 0-1.300-.7-1.300-1.600zM4 6.500v6.800h1.100V6.500zm2.450 0v6.800h1.100V6.500zm2.450 0v6.800H10V6.500z"/></svg></span></td></tr><tr class="o"><td><span class="cb"></span></td><td>29</td><td>1234567891</td><td>yongxin</td><td>6.825</td><td>1</td><td>Admin我最牛逼</td><td>0</td><td>0</td><td>154.204.30.31</td><td>2021-05-06 15:09:49</td><td class="st"><b></b>Status 0</td><td><span class="ob" style="width:63px;background:#2c3e50;padding-right:2px"><svg class="i " viewBox="0 0 16 16" width="13.50" height="13.50" style="" fill="currentColor"><path fill="none" stroke="currentColor" stroke-width="1.400" stroke-linejoin="round" stroke-linecap="round" d="M4.800 14.800C4.800 13 2.600 11.800 1.700 10.200C.9 8.800 1.200 7 2.600 6.700C3.100 6.600 3.600 6.800 3.800 7.200V4.200C3.800 2.700 5.900 2.300 6.300 3.700C6.500 1.700 8.900 1.500 9.200 3.400C9.600 1.900 11.700 2.200 11.800 3.900C12.300 2.900 14.300 3.200 14.300 5V9.300C14.300 11.200 12.600 12.400 12.600 14.800ZM6.300 3.700V6.800M9.100 3.400V6.800M11.800 3.900V6.800"/></svg><span style="margin-left:2.3px">上下分</span></span><span class="ob" style="width:22px;background:#18bc9c"><svg class="i " viewBox="0 0 16 16" width="11.50" height="11.50" style="" fill="currentColor"><path d="M11.800 1c.5-.5 1.200-.5 1.700 0L15 2.500c.5.500.5 1.200 0 1.700l-1.500 1.500-3.200-3.200zM9.500 3.300l3.200 3.200-8 8L.9 15.400c-.2.100-.4-.1-.3-.3L1.500 11.300z"/></svg></span><span class="ob" style="width:21px;background:#e74c3c;margin-left:1.3px"><svg class="i " viewBox="0 0 14 16" width="10.06" height="11.50" style="" fill="currentColor"><path fill-rule="evenodd" d="M4.800 1h4.400l.9 1.600h3.200c.2 0 .3.100.3.300v.8c0 .2-.1.300-.3.300H.700c-.2 0-.3-.1-.3-.3v-.8c0-.2.100-.3.300-.3h3.200zM1.400 4.800h11.200v8.900c0 .9-.6 1.600-1.300 1.600H2.700c-.7 0-1.300-.7-1.300-1.600zM4 6.500v6.800h1.100V6.500zm2.450 0v6.800h1.100V6.500zm2.450 0v6.800H10V6.500z"/></svg></span></td></tr><tr class=""><td><span class="cb"></span></td><td>28</td><td>75644821748</td><td>75644821748</td><td>28817.200</td><td>82</td><td>dl3003</td><td>26</td><td>25</td><td>47.57.12.224</td><td>2020-10-24 16:00:38</td><td class="st"><b></b>Status 0</td><td><span class="ob" style="width:63px;background:#2c3e50;padding-right:2px"><svg class="i " viewBox="0 0 16 16" width="13.50" height="13.50" style="" fill="currentColor"><path fill="none" stroke="currentColor" stroke-width="1.400" stroke-linejoin="round" stroke-linecap="round" d="M4.800 14.800C4.800 13 2.600 11.800 1.700 10.200C.9 8.800 1.200 7 2.600 6.700C3.100 6.600 3.600 6.800 3.800 7.200V4.200C3.800 2.700 5.900 2.300 6.300 3.700C6.500 1.700 8.900 1.500 9.200 3.400C9.600 1.900 11.700 2.200 11.800 3.900C12.300 2.900 14.300 3.200 14.300 5V9.300C14.300 11.200 12.600 12.400 12.600 14.800ZM6.300 3.700V6.800M9.100 3.400V6.800M11.800 3.900V6.800"/></svg><span style="margin-left:2.3px">上下分</span></span><span class="ob" style="width:22px;background:#18bc9c"><svg class="i " viewBox="0 0 16 16" width="11.50" height="11.50" style="" fill="currentColor"><path d="M11.800 1c.5-.5 1.200-.5 1.700 0L15 2.500c.5.500.5 1.200 0 1.700l-1.500 1.500-3.200-3.200zM9.500 3.300l3.200 3.200-8 8L.9 15.400c-.2.100-.4-.1-.3-.3L1.500 11.300z"/></svg></span><span class="ob" style="width:21px;background:#e74c3c;margin-left:1.3px"><svg class="i " viewBox="0 0 14 16" width="10.06" height="11.50" style="" fill="currentColor"><path fill-rule="evenodd" d="M4.800 1h4.400l.9 1.600h3.200c.2 0 .3.100.3.300v.8c0 .2-.1.300-.3.300H.700c-.2 0-.3-.1-.3-.3v-.8c0-.2.100-.3.300-.3h3.200zM1.400 4.800h11.200v8.900c0 .9-.6 1.600-1.300 1.600H2.700c-.7 0-1.300-.7-1.300-1.600zM4 6.500v6.800h1.100V6.500zm2.450 0v6.800h1.100V6.500zm2.450 0v6.800H10V6.500z"/></svg></span></td></tr><tr class="h"><td><span class="cb"></span></td><td>27</td><td>75644821747</td><td>75644821747</td><td>72803.600</td><td>82</td><td>dl3003</td><td>25</td><td>22</td><td>47.57.12.224</td><td>2020-10-24 16:00:22</td><td class="st"><b></b>Status 0</td><td><span class="ob" style="width:63px;background:#2c3e50;padding-right:2px"><svg class="i " viewBox="0 0 16 16" width="13.50" height="13.50" style="" fill="currentColor"><path fill="none" stroke="currentColor" stroke-width="1.400" stroke-linejoin="round" stroke-linecap="round" d="M4.800 14.800C4.800 13 2.600 11.800 1.700 10.200C.9 8.800 1.200 7 2.600 6.700C3.100 6.600 3.600 6.800 3.800 7.200V4.200C3.800 2.700 5.900 2.300 6.300 3.700C6.500 1.700 8.900 1.500 9.200 3.400C9.600 1.900 11.700 2.200 11.800 3.900C12.300 2.900 14.300 3.200 14.300 5V9.300C14.300 11.200 12.600 12.400 12.600 14.800ZM6.300 3.700V6.800M9.100 3.400V6.800M11.800 3.900V6.800"/></svg><span style="margin-left:2.3px">上下分</span></span><span class="ob" style="width:22px;background:#18bc9c"><svg class="i " viewBox="0 0 16 16" width="11.50" height="11.50" style="" fill="currentColor"><path d="M11.800 1c.5-.5 1.200-.5 1.700 0L15 2.500c.5.500.5 1.200 0 1.700l-1.500 1.500-3.200-3.200zM9.500 3.300l3.200 3.200-8 8L.9 15.400c-.2.100-.4-.1-.3-.3L1.500 11.300z"/></svg></span><span class="ob" style="width:21px;background:#e74c3c;margin-left:1.3px"><svg class="i " viewBox="0 0 14 16" width="10.06" height="11.50" style="" fill="currentColor"><path fill-rule="evenodd" d="M4.800 1h4.400l.9 1.600h3.200c.2 0 .3.100.3.300v.8c0 .2-.1.300-.3.300H.700c-.2 0-.3-.1-.3-.3v-.8c0-.2.100-.3.300-.3h3.200zM1.400 4.800h11.200v8.900c0 .9-.6 1.600-1.300 1.600H2.700c-.7 0-1.300-.7-1.300-1.600zM4 6.500v6.800h1.100V6.500zm2.450 0v6.800h1.100V6.500zm2.450 0v6.800H10V6.500z"/></svg></span></td></tr><tr class=""><td><span class="cb"></span></td><td>26</td><td>75644821746</td><td>75644821746</td><td>22798.200</td><td>82</td><td>dl3003</td><td>25</td><td>22</td><td>47.57.12.224</td><td>2020-10-24 16:00:06</td><td class="st"><b></b>Status 0</td><td><span class="ob" style="width:63px;background:#2c3e50;padding-right:2px"><svg class="i " viewBox="0 0 16 16" width="13.50" height="13.50" style="" fill="currentColor"><path fill="none" stroke="currentColor" stroke-width="1.400" stroke-linejoin="round" stroke-linecap="round" d="M4.800 14.800C4.800 13 2.600 11.800 1.700 10.200C.9 8.800 1.200 7 2.600 6.700C3.100 6.600 3.600 6.800 3.800 7.200V4.200C3.800 2.700 5.900 2.300 6.300 3.700C6.500 1.700 8.900 1.500 9.200 3.400C9.600 1.900 11.700 2.200 11.800 3.900C12.300 2.900 14.300 3.200 14.300 5V9.300C14.300 11.200 12.600 12.400 12.600 14.800ZM6.300 3.700V6.800M9.100 3.400V6.800M11.800 3.900V6.800"/></svg><span style="margin-left:2.3px">上下分</span></span><span class="ob" style="width:22px;background:#18bc9c"><svg class="i " viewBox="0 0 16 16" width="11.50" height="11.50" style="" fill="currentColor"><path d="M11.800 1c.5-.5 1.200-.5 1.700 0L15 2.500c.5.500.5 1.200 0 1.700l-1.500 1.500-3.200-3.200zM9.500 3.300l3.200 3.200-8 8L.9 15.400c-.2.100-.4-.1-.3-.3L1.500 11.300z"/></svg></span><span class="ob" style="width:21px;background:#e74c3c;margin-left:1.3px"><svg class="i " viewBox="0 0 14 16" width="10.06" height="11.50" style="" fill="currentColor"><path fill-rule="evenodd" d="M4.800 1h4.400l.9 1.600h3.200c.2 0 .3.100.3.300v.8c0 .2-.1.300-.3.300H.700c-.2 0-.3-.1-.3-.3v-.8c0-.2.100-.3.300-.3h3.200zM1.400 4.800h11.200v8.900c0 .9-.6 1.600-1.300 1.600H2.700c-.7 0-1.300-.7-1.300-1.600zM4 6.500v6.800h1.100V6.500zm2.450 0v6.800h1.100V6.500zm2.450 0v6.800H10V6.500z"/></svg></span></td></tr><tr class="o"><td><span class="cb"></span></td><td>25</td><td>75644821745</td><td>75644821745</td><td>28312.200</td><td>82</td><td>dl3003</td><td>22</td><td>21</td><td>47.57.12.224</td><td>2020-10-24 15:59:52</td><td class="st"><b></b>Status 0</td><td><span class="ob" style="width:63px;background:#2c3e50;padding-right:2px"><svg class="i " viewBox="0 0 16 16" width="13.50" height="13.50" style="" fill="currentColor"><path fill="none" stroke="currentColor" stroke-width="1.400" stroke-linejoin="round" stroke-linecap="round" d="M4.800 14.800C4.800 13 2.600 11.800 1.700 10.200C.9 8.800 1.200 7 2.600 6.700C3.100 6.600 3.600 6.800 3.800 7.200V4.200C3.800 2.700 5.900 2.300 6.300 3.700C6.500 1.700 8.900 1.500 9.200 3.400C9.600 1.900 11.700 2.200 11.800 3.900C12.300 2.900 14.300 3.200 14.300 5V9.300C14.300 11.200 12.600 12.400 12.600 14.800ZM6.300 3.700V6.800M9.100 3.400V6.800M11.800 3.900V6.800"/></svg><span style="margin-left:2.3px">上下分</span></span><span class="ob" style="width:22px;background:#18bc9c"><svg class="i " viewBox="0 0 16 16" width="11.50" height="11.50" style="" fill="currentColor"><path d="M11.800 1c.5-.5 1.200-.5 1.700 0L15 2.500c.5.500.5 1.200 0 1.700l-1.500 1.500-3.200-3.200zM9.500 3.300l3.200 3.200-8 8L.9 15.400c-.2.100-.4-.1-.3-.3L1.500 11.300z"/></svg></span><span class="ob" style="width:21px;background:#e74c3c;margin-left:1.3px"><svg class="i " viewBox="0 0 14 16" width="10.06" height="11.50" style="" fill="currentColor"><path fill-rule="evenodd" d="M4.800 1h4.400l.9 1.600h3.200c.2 0 .3.100.3.300v.8c0 .2-.1.300-.3.300H.700c-.2 0-.3-.1-.3-.3v-.8c0-.2.100-.3.300-.3h3.200zM1.400 4.800h11.200v8.900c0 .9-.6 1.600-1.300 1.600H2.700c-.7 0-1.300-.7-1.300-1.600zM4 6.500v6.800h1.100V6.500zm2.450 0v6.800h1.100V6.500zm2.450 0v6.800H10V6.500z"/></svg></span></td></tr><tr class=""><td><span class="cb"></span></td><td>24</td><td>75644821744</td><td>75644821744</td><td>30639.860</td><td>82</td><td>dl3003</td><td>22</td><td>21</td><td>47.57.12.224</td><td>2020-10-24 15:59:43</td><td class="st"><b></b>Status 0</td><td><span class="ob" style="width:63px;background:#2c3e50;padding-right:2px"><svg class="i " viewBox="0 0 16 16" width="13.50" height="13.50" style="" fill="currentColor"><path fill="none" stroke="currentColor" stroke-width="1.400" stroke-linejoin="round" stroke-linecap="round" d="M4.800 14.800C4.800 13 2.600 11.800 1.700 10.200C.9 8.800 1.200 7 2.600 6.700C3.100 6.600 3.600 6.800 3.800 7.200V4.200C3.800 2.700 5.900 2.300 6.300 3.700C6.500 1.700 8.900 1.500 9.200 3.400C9.600 1.900 11.700 2.200 11.800 3.900C12.300 2.900 14.300 3.200 14.300 5V9.300C14.300 11.200 12.600 12.400 12.600 14.800ZM6.300 3.700V6.800M9.100 3.400V6.800M11.800 3.900V6.800"/></svg><span style="margin-left:2.3px">上下分</span></span><span class="ob" style="width:22px;background:#18bc9c"><svg class="i " viewBox="0 0 16 16" width="11.50" height="11.50" style="" fill="currentColor"><path d="M11.800 1c.5-.5 1.200-.5 1.700 0L15 2.500c.5.500.5 1.200 0 1.700l-1.500 1.500-3.200-3.200zM9.500 3.300l3.200 3.200-8 8L.9 15.400c-.2.100-.4-.1-.3-.3L1.500 11.300z"/></svg></span><span class="ob" style="width:21px;background:#e74c3c;margin-left:1.3px"><svg class="i " viewBox="0 0 14 16" width="10.06" height="11.50" style="" fill="currentColor"><path fill-rule="evenodd" d="M4.800 1h4.400l.9 1.600h3.200c.2 0 .3.100.3.300v.8c0 .2-.1.300-.3.300H.700c-.2 0-.3-.1-.3-.3v-.8c0-.2.100-.3.300-.3h3.200zM1.400 4.800h11.200v8.900c0 .9-.6 1.600-1.300 1.600H2.700c-.7 0-1.300-.7-1.300-1.600zM4 6.500v6.800h1.100V6.500zm2.450 0v6.800h1.100V6.500zm2.450 0v6.800H10V6.500z"/></svg></span></td></tr></tbody></table><div id="pd">显示第 1 到第 10 条记录，总共 32 条记录 每页显示 <span style="display:inline-block;width:50px;height:30.5px;line-height:28.5px;border:1px solid #ddd;border-radius:3px;background:#f4f4f4;text-align:center;vertical-align:top;font-size:12px;margin:2px 2px 0">10 <svg class="i " viewBox="0 0 8 16" width="7.00" height="14.00" style="" fill="currentColor"><path d="M0 10h8L4 6z"/></svg></span> 条记录</div><div class="pg" style="left:880.2px;width:76.6px;border-radius:3px 0 0 3px;">Previous</div><div class="pg" style="left:955.7px;width:34.3px;background:#2c3e50;border-color:#2c3e50;color:#fff;">1</div><div class="pg" style="left:989.1px;width:32.9px;">2</div><div class="pg" style="left:1020.9px;width:32.9px;">3</div><div class="pg" style="left:1052.8px;width:32.9px;">4</div><div class="pg" style="left:1084.6px;width:53.6px;border-radius:0 3px 3px 0;">Next</div><div class="pg" style="left:1143.1px;width:49.6px;background:#fff;border-radius:0;border-color:#d2d6de;margin:0"></div><div class="pg" style="left:1198.0px;width:41.5px;border-radius:3px;margin:0;background:#f4f4f4;color:#444;font-size:12px">Go</div></div></div></body></html>
